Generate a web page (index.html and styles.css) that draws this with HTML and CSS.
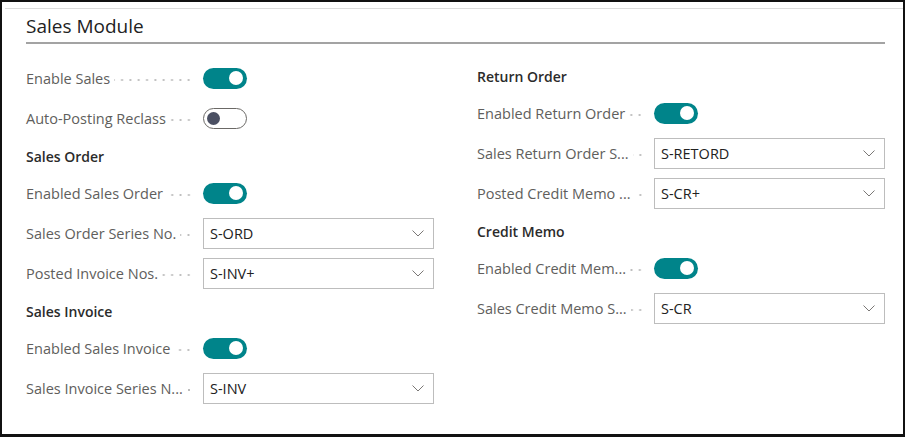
FILE: index.html
```html
<!DOCTYPE html>
<html lang="en">
<head>
<meta charset="utf-8">
<title>Sales Module</title>
<link rel="stylesheet" href="styles.css">
</head>
<body>
<div class="frame">
  <div class="topline"></div>
  <div class="content">
    <h1 class="title">Sales Module</h1>
    <div class="columns">
      <div class="col">
        <div class="field">
          <div class="lab"><span class="txt">Enable Sales</span><span class="lead"></span></div>
          <span class="toggle on"><span class="knob"></span></span>
        </div>
        <div class="field">
          <div class="lab"><span class="txt">Auto-Posting Reclass</span><span class="lead"></span></div>
          <span class="toggle off"><span class="knob"></span></span>
        </div>
        <div class="group">Sales Order</div>
        <div class="field">
          <div class="lab"><span class="txt">Enabled Sales Order</span><span class="lead"></span></div>
          <span class="toggle on"><span class="knob"></span></span>
        </div>
        <div class="field">
          <div class="lab"><span class="txt">Sales Order Series No.</span><span class="lead"></span></div>
          <div class="select"><span class="val">S-ORD</span><svg class="chev" width="12" height="7" viewBox="0 0 12 7"><polyline points="0.5,0.5 6,6 11.5,0.5" fill="none" stroke="#7a7775" stroke-width="1"/></svg></div>
        </div>
        <div class="field">
          <div class="lab"><span class="txt">Posted Invoice Nos.</span><span class="lead"></span></div>
          <div class="select"><span class="val">S-INV+</span><svg class="chev" width="12" height="7" viewBox="0 0 12 7"><polyline points="0.5,0.5 6,6 11.5,0.5" fill="none" stroke="#7a7775" stroke-width="1"/></svg></div>
        </div>
        <div class="group">Sales Invoice</div>
        <div class="field">
          <div class="lab"><span class="txt">Enabled Sales Invoice</span><span class="lead"></span></div>
          <span class="toggle on"><span class="knob"></span></span>
        </div>
        <div class="field">
          <div class="lab" title="Sales Invoice Series No."><span class="txt">Sales Invoice Series N...</span><span class="lead"></span></div>
          <div class="select"><span class="val">S-INV</span><svg class="chev" width="12" height="7" viewBox="0 0 12 7"><polyline points="0.5,0.5 6,6 11.5,0.5" fill="none" stroke="#7a7775" stroke-width="1"/></svg></div>
        </div>
      </div>
      <div class="col">
        <div class="group">Return Order</div>
        <div class="field">
          <div class="lab"><span class="txt">Enabled Return Order</span><span class="lead"></span></div>
          <span class="toggle on"><span class="knob"></span></span>
        </div>
        <div class="field">
          <div class="lab" title="Sales Return Order Series No."><span class="txt">Sales Return Order S...</span><span class="lead"></span></div>
          <div class="select"><span class="val">S-RETORD</span><svg class="chev" width="12" height="7" viewBox="0 0 12 7"><polyline points="0.5,0.5 6,6 11.5,0.5" fill="none" stroke="#7a7775" stroke-width="1"/></svg></div>
        </div>
        <div class="field">
          <div class="lab" title="Posted Credit Memo Nos."><span class="txt">Posted Credit Memo ...</span><span class="lead"></span></div>
          <div class="select"><span class="val">S-CR+</span><svg class="chev" width="12" height="7" viewBox="0 0 12 7"><polyline points="0.5,0.5 6,6 11.5,0.5" fill="none" stroke="#7a7775" stroke-width="1"/></svg></div>
        </div>
        <div class="group">Credit Memo</div>
        <div class="field">
          <div class="lab" title="Enabled Credit Memo"><span class="txt">Enabled Credit Mem...</span><span class="lead"></span></div>
          <span class="toggle on"><span class="knob"></span></span>
        </div>
        <div class="field">
          <div class="lab" title="Sales Credit Memo Series No."><span class="txt">Sales Credit Memo S...</span><span class="lead"></span></div>
          <div class="select"><span class="val">S-CR</span><svg class="chev" width="12" height="7" viewBox="0 0 12 7"><polyline points="0.5,0.5 6,6 11.5,0.5" fill="none" stroke="#7a7775" stroke-width="1"/></svg></div>
        </div>
      </div>
    </div>
  </div>
</div>
</body>
</html>
```
FILE: styles.css
```css
* { box-sizing: border-box; }
html, body { margin: 0; padding: 0; background: #fff; }
body { font-family: "Open Sans", "Noto Sans", sans-serif; }

.frame {
  width: 905px;
  height: 437px;
  border-style: solid;
  border-color: #111;
  border-width: 2px 2px 3px 2px;
  overflow: hidden;
}
.topline {
  height: 7px;
  margin-left: 3px;
  border-bottom: 1px solid #dcdcdc;
}
.content {
  padding: 0 18px 0 24px;
}
.title {
  margin: 0;
  padding: 5px 0 4px 0;
  font-size: 19px;
  line-height: 24px;
  font-weight: 500;
  color: #222;
  border-bottom: 2px solid #a3a3a3;
}
.columns {
  margin-top: 14px;
  display: grid;
  grid-template-columns: 408px 408px;
  column-gap: 43px;
}
.col { display: flex; flex-direction: column; }
.group {
  height: 35px;
  padding-top: 9px;
  font-size: 14px;
  line-height: 19px;
  font-weight: 600;
  color: #2b2b2b;
}
.field {
  height: 40px;
  display: flex;
  align-items: center;
}
.lab {
  width: 177px;
  flex: none;
  display: flex;
  align-items: center;
  padding-right: 10px;
  font-size: 14.5px;
  color: #605e5c;
}
.txt {
  flex: none;
  white-space: nowrap;
}
.lead {
  flex: 1 1 0;
  min-width: 0;
  height: 4px;
  margin-top: 4px;
  margin-left: 4px;
  background-image: radial-gradient(circle, #bdbdbd 0.8px, transparent 1.3px);
  background-size: 8.33px 4px;
  background-position: right center;
  background-repeat: repeat-x;
}
.toggle {
  width: 44px;
  height: 21px;
  border-radius: 11px;
  display: flex;
  align-items: center;
  flex: none;
}
.toggle.on {
  background: #00848a;
  justify-content: flex-end;
  padding-right: 4px;
}
.toggle.on .knob {
  width: 14px;
  height: 14px;
  border-radius: 50%;
  background: #fff;
}
.toggle.off {
  background: #fff;
  border: 1px solid #6b6966;
  padding-left: 3px;
}
.toggle.off .knob {
  width: 13px;
  height: 13px;
  border-radius: 50%;
  background: #4b5063;
}
.select {
  width: 231px;
  height: 31px;
  border: 1px solid #bdbdbd;
  display: flex;
  align-items: center;
  justify-content: space-between;
  padding: 0 9px 0 6px;
  font-size: 14.5px;
  color: #212121;
}
.chev { display: block; }
```
